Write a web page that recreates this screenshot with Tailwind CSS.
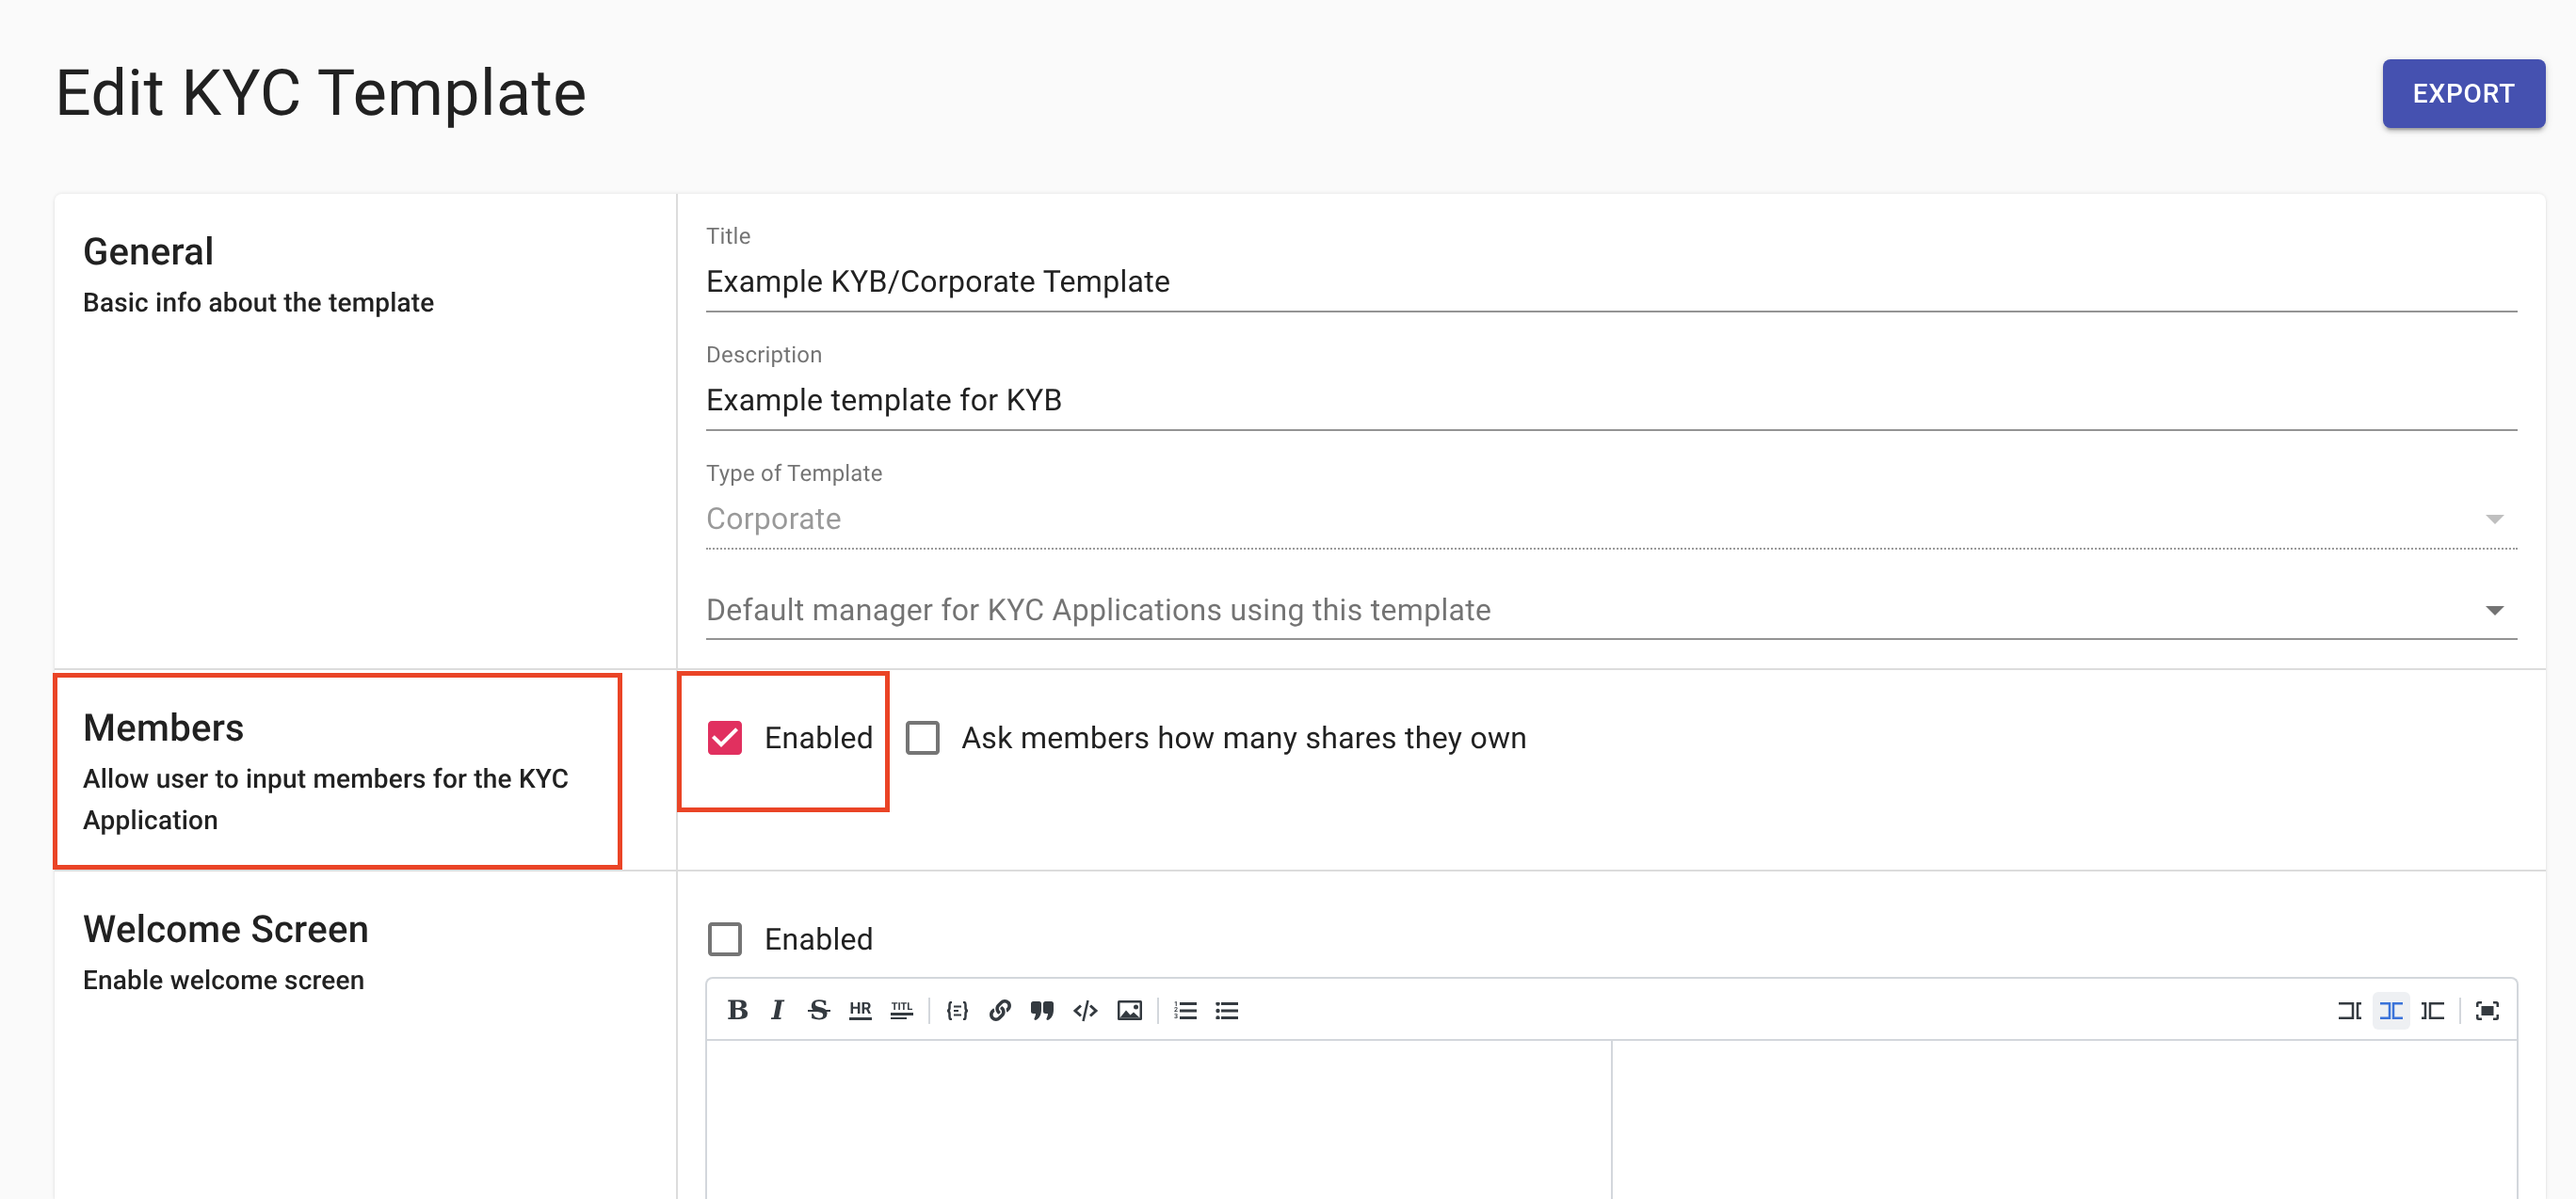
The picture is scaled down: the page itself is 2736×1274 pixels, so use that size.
<!DOCTYPE html>
<html lang="en">
  <head>
    <meta charset="UTF-8" />
    <title>Edit KYC Template</title>
    <script src="https://cdn.jsdelivr.net/npm/@tailwindcss/browser@4"></script>
  </head>
  <body class="bg-[#fafafa] h-[1274px] overflow-hidden font-['Roboto',sans-serif] text-[#212121] [text-rendering:geometricPrecision]">
    <div class="pl-[58px] pr-[32px] will-change-transform">
      <!-- Header -->
      <div class="flex items-start justify-between h-[206px] pt-[63px]">
        <h1 class="text-[68px] leading-[72px] tracking-[0.5px] font-normal">Edit KYC Template</h1>
        <button class="h-[73px] px-[32px] bg-[#4551b0] text-white rounded-[8px] text-[28px] font-medium tracking-[0.8px] uppercase shadow-[0_6px_2px_-4px_rgba(0,0,0,0.2),0_4px_4px_0_rgba(0,0,0,0.14),0_2px_10px_0_rgba(0,0,0,0.12)]">
          Export
        </button>
      </div>

      <!-- Card -->
      <div class="relative bg-white rounded-t-[8px] shadow-[0_2px_2px_0_rgba(0,0,0,0.1),0_0_4px_0_rgba(0,0,0,0.1)] grid grid-cols-[662px_1fr]">
        <!-- General -->
        <div class="border-r-2 border-b-2 border-[#dcdcdc] p-[30px] h-[506px]">
          <h2 class="text-[40px] leading-[64px] font-medium tracking-[0.3px]">General</h2>
          <p class="text-[28px] leading-[44px] font-medium tracking-[0.2px]">Basic info about the template</p>
        </div>
        <div class="border-b-2 border-[#dcdcdc] pt-[31px] px-[30px]">
          <div class="mb-[31px]">
            <label class="block h-[28px] text-[24px] leading-[28px] tracking-[0.2px] text-black/55">Title</label>
            <div class="mt-[15px] pb-[12px] text-[32px] leading-[38px] tracking-[0.3px] border-b-2 border-[#949494]">Example KYB/Corporate Template</div>
          </div>
          <div class="mb-[31px]">
            <label class="block h-[28px] text-[24px] leading-[28px] tracking-[0.2px] text-black/55">Description</label>
            <div class="mt-[15px] pb-[12px] text-[32px] leading-[38px] tracking-[0.3px] border-b-2 border-[#949494]">Example template for KYB</div>
          </div>
          <div class="mb-[45px]">
            <label class="block h-[28px] text-[24px] leading-[28px] tracking-[0.2px] text-black/55">Type of Template</label>
            <div class="mt-[15px] pb-[12px] flex items-center justify-between text-[32px] leading-[38px] tracking-[0.3px] text-black/40 border-b-2 border-dotted border-[#9a9a9a]">
              Corporate
              <svg class="w-[48px] h-[48px] -my-[5px] fill-black/25" viewBox="0 0 24 24"><path d="M7 10l5 5 5-5z" /></svg>
            </div>
          </div>
          <div class="pb-[11px] flex items-center justify-between text-[32px] leading-[38px] tracking-[0.3px] text-black/55 border-b-2 border-[#949494]">
            Default manager for KYC Applications using this template
            <svg class="w-[48px] h-[48px] -my-[5px] fill-black/55" viewBox="0 0 24 24"><path d="M7 10l5 5 5-5z" /></svg>
          </div>
        </div>

        <!-- Members -->
        <div class="border-r-2 border-b-2 border-[#dcdcdc] p-[30px] h-[214px]">
          <h2 class="text-[40px] leading-[64px] font-medium tracking-[0.3px]">Members</h2>
          <p class="text-[28px] leading-[44px] font-medium tracking-[0.2px]">Allow user to input members for the KYC Application</p>
        </div>
        <div class="border-b-2 border-[#dcdcdc] pt-[54px] pl-[32px]">
          <div class="flex items-center text-[32px] leading-[36px] tracking-[0.3px]">
            <svg class="w-[48px] h-[48px] -m-[6px] fill-[#e1305f]" viewBox="0 0 24 24"><path d="M19 3H5c-1.110 0-2 .9-2 2v14c0 1.100.89 2 2 2h14c1.110 0 2-.9 2-2V5c0-1.110-.89-2-2-2zm-9 14l-5-5 1.410-1.410L10 14.170l7.590-7.590L19 8l-9 9z" /></svg>
            <span class="ml-[24px]">Enabled</span>
            <svg class="ml-[28px] w-[48px] h-[48px] -my-[6px] -mr-[6px] fill-[#757575]" viewBox="0 0 24 24"><path d="M19 5v14H5V5h14m0-2H5c-1.100 0-2 .9-2 2v14c0 1.100.9 2 2 2h14c1.100 0 2-.89 2-2V5c0-1.100-.9-2-2-2z" /></svg>
            <span class="ml-[23px]">Ask members how many shares they own</span>
          </div>
        </div>

        <!-- Welcome Screen -->
        <div class="border-r-2 border-[#dcdcdc] p-[30px] h-[348px]">
          <h2 class="text-[40px] leading-[64px] font-medium tracking-[0.3px]">Welcome Screen</h2>
          <p class="text-[28px] leading-[44px] font-medium tracking-[0.2px]">Enable welcome screen</p>
        </div>
        <div class="pt-[54px] px-[30px]">
          <div class="flex items-center pl-[2px] text-[32px] leading-[36px] tracking-[0.3px]">
            <svg class="w-[48px] h-[48px] -m-[6px] fill-[#757575]" viewBox="0 0 24 24"><path d="M19 5v14H5V5h14m0-2H5c-1.100 0-2 .9-2 2v14c0 1.100.9 2 2 2h14c1.100 0 2-.89 2-2V5c0-1.100-.9-2-2-2z" /></svg>
            <span class="ml-[24px]">Enabled</span>
          </div>
          <!-- Markdown editor -->
          <div class="mt-[22px] -mx-[1px] h-[236px] rounded-t-[8px] border-2 border-b-0 border-[#d3d7dc]">
            <div class="h-[66px] border-b-2 border-[#d3d7dc] flex items-center justify-between pt-[3px] pl-[21px] pr-[19px] text-[#343a40]">
              <div class="flex items-center">
                <span class="w-[20px] text-center font-['DejaVu_Serif',serif] font-bold text-[28px] leading-[30px]">B</span>
                <span class="w-[20px] ml-[24px] text-center font-['DejaVu_Serif',serif] font-bold italic text-[28px] leading-[30px]">I</span>
                <span class="relative w-[24px] ml-[22px] text-center font-['DejaVu_Serif',serif] font-bold text-[28px] leading-[30px]">S<span class="absolute left-0 right-0 top-[14px] h-[2px] bg-[#343a40]"></span></span>
                <span class="ml-[20px] w-[24px] flex flex-col items-center">
                  <span class="text-[17px] leading-[16px] font-bold">HR</span>
                  <span class="w-full h-[3px] bg-[#343a40] mt-[1px]"></span>
                </span>
                <span class="ml-[20px] w-[24px] flex flex-col items-center">
                  <span class="text-[11px] leading-[10px] font-bold">TITL</span>
                  <span class="w-full h-[3px] bg-[#343a40] mt-[1px]"></span>
                  <span class="self-start w-[17px] h-[2px] bg-[#343a40] mt-[2px]"></span>
                </span>
                <span class="ml-[16px] w-[2px] h-[28px] bg-[#d3d7dc]"></span>
                <svg class="ml-[17px] w-[24px] h-[20px]" viewBox="0 0 24 20" fill="none" stroke="#343a40" stroke-width="2.500"><path d="M6 1H5C3.500 1 3.500 2.500 3.500 4v3c0 2-1 3-2.500 3 1.500 0 2.500 1 2.500 3v3c0 1.500 0 3 1.500 3h1M18 1h1c1.500 0 1.500 1.500 1.500 3v3c0 2 1 3 2.500 3-1.500 0-2.500 1-2.500 3v3c0 1.500 0 3-1.500 3h-1" /><path d="M8 5.500h8M8 10h5M8 14.500h8" stroke-width="2" /></svg>
                <svg class="ml-[22px] w-[23px] h-[23px]" viewBox="0 0 512 512" fill="#343a40"><path d="M326.600 185.400c59.700 59.800 58.900 155.700.4 214.600l-67.200 67.200c-59.300 59.300-155.700 59.300-215 0-59.300-59.300-59.300-155.700 0-215l37.100-37.100c9.800-9.800 26.800-3.300 27.300 10.600.6 17.700 3.800 35.500 9.700 52.700 2 5.800.6 12.300-3.800 16.600l-13.100 13.100c-28 28-28.900 73.700-1.200 102 28 28.600 74.100 28.700 102.300.5l67.200-67.200c28.200-28.200 28.100-73.800 0-101.800-3.700-3.700-7.400-6.600-10.300-8.600-4.900-3.400-8-8.900-8.200-14.800-.4-10.700 3.400-21.700 11.800-30.100l21.100-21.100c5.500-5.500 14.200-6.200 20.600-1.700 7.300 5.100 14.200 10.800 20.300 17.100zM467.500 44.400c-59.300-59.300-155.700-59.300-215 0l-67.200 67.200c-58.600 58.900-59.400 154.800.3 214.600 6.100 6.300 13 12 20.300 17.100 6.400 4.500 15.100 3.800 20.600-1.700l21.100-21.100c8.400-8.400 12.200-19.400 11.800-30.100-.2-5.900-3.300-11.400-8.200-14.800-2.900-2-6.600-4.900-10.300-8.600-28.100-28-28.200-73.600 0-101.800l67.200-67.200c28.200-28.200 74.300-28.100 102.300.5 27.700 28.300 26.800 74-1.200 102l-13.100 13.100c-4.400 4.300-5.800 10.800-3.800 16.600 5.900 17.200 9.100 35 9.700 52.700.5 13.900 17.500 20.400 27.300 10.600l37.100-37.100c59.300-59.300 59.300-155.700 0-215z" /></svg>
                <svg class="ml-[21px] w-[24px] h-[20px]" viewBox="0 0 24 20" fill="#343a40"><path d="M0 2.500A2.500 2.500 0 0 1 2.500 0h6A2.500 2.500 0 0 1 11 2.500V9c0 5-2 9-5.500 10.800-1 .5-2.500-.3-2-1.500.7-1.500 1.500-3.300 1.500-5.300H2.500A2.500 2.500 0 0 1 0 10.500z" /><path d="M13 2.500A2.500 2.500 0 0 1 15.500 0h6A2.500 2.500 0 0 1 24 2.500V9c0 5-2 9-5.500 10.800-1 .5-2.500-.3-2-1.500.7-1.500 1.500-3.300 1.500-5.300h-2.500a2.500 2.500 0 0 1-2.500-2.500z" /></svg>
                <svg class="ml-[20px] w-[28px] h-[24px]" viewBox="0 0 28 24" fill="none" stroke="#343a40" stroke-width="3"><path d="M9 6.500L3 12l6 5.500M19 6.500l6 5.500-6 5.500" /><path d="M16.500 1l-5 22" stroke-width="2.500" /></svg>
                <svg class="ml-[20px] w-[26px] h-[21px]" viewBox="0 0 26 21"><rect width="26" height="21" rx="1.500" fill="#343a40" /><path d="M2.500 2.500h21v16h-21z" fill="#fff" /><path d="M2.500 18.500l6.500-8 4.500 5 3.500-3 6.500 6z" fill="#343a40" /><circle cx="19.500" cy="7" r="2.500" fill="#343a40" /></svg>
                <span class="ml-[16px] w-[2px] h-[28px] bg-[#d3d7dc]"></span>
                <span class="ml-[16px] flex items-center w-[24px]">
                  <span class="flex flex-col items-start text-[7px] leading-[6.500px] font-bold w-[6px]"><span>1</span><span>2</span><span>3</span></span>
                  <svg class="w-[18px] h-[18px]" viewBox="0 0 18 18" fill="#343a40"><path d="M0 0h18v3H0zM0 7.500h18v3H0zM0 15h18v3H0z" /></svg>
                </span>
                <svg class="ml-[20px] w-[24px] h-[18px]" viewBox="0 0 24 18" fill="#343a40"><path d="M6 0h18v3H6zM6 7.500h18v3H6zM6 15h18v3H6z" /><circle cx="2.500" cy="1.500" r="2.200" /><circle cx="2.500" cy="9" r="2.200" /><circle cx="2.500" cy="16.500" r="2.200" /></svg>
              </div>
              <div class="flex items-center">
                <svg class="w-[24px] h-[18px]" viewBox="0 0 24 18" fill="none" stroke="#343a40" stroke-width="2.500"><path d="M0 1.250h15v15.500H0M24 1.250h-4v15.500h4" /></svg>
                <span class="ml-[12px] w-[40px] h-[40px] rounded-[6px] bg-[#eef0f3] flex items-center justify-center">
                  <svg class="w-[24px] h-[18px]" viewBox="0 0 24 18" fill="none" stroke="#3b73d9" stroke-width="2.500"><path d="M0 1.250h10v15.500H0M24 1.250H14v15.500h10" /></svg>
                </span>
                <svg class="ml-[12px] w-[24px] h-[18px]" viewBox="0 0 24 18" fill="none" stroke="#343a40" stroke-width="2.500"><path d="M0 1.250h4v15.500H0M24 1.250H9v15.500h15" /></svg>
                <span class="ml-[16px] w-[2px] h-[28px] bg-[#d3d7dc]"></span>
                <svg class="ml-[16px] w-[24px] h-[20px]" viewBox="0 0 24 20" fill="none" stroke="#343a40" stroke-width="2.500"><path d="M1.250 6V2.500a1.250 1.250 0 0 1 1.250-1.250H6M18 1.250h3.500a1.250 1.250 0 0 1 1.250 1.250V6M22.750 14v3.500a1.250 1.250 0 0 1-1.250 1.250H18M6 18.750H2.500a1.250 1.250 0 0 1-1.250-1.250V14" /><path d="M5.500 5h13v10h-13z" fill="#343a40" stroke="none" /></svg>
              </div>
            </div>
            <div class="flex h-[168px]">
              <div class="w-[calc(50%+1px)] border-r-2 border-[#d3d7dc]"></div>
            </div>
          </div>
        </div>

        <!-- Annotation boxes drawn on top of the screenshot -->
        <div class="absolute left-[-2px] top-[509px] w-[605px] h-[209px] border-[5px] border-[#ea4426]"></div>
        <div class="absolute left-[661px] top-[507px] w-[226px] h-[150px] border-[5px] border-[#ea4426]"></div>
      </div>
    </div>
  </body>
</html>
